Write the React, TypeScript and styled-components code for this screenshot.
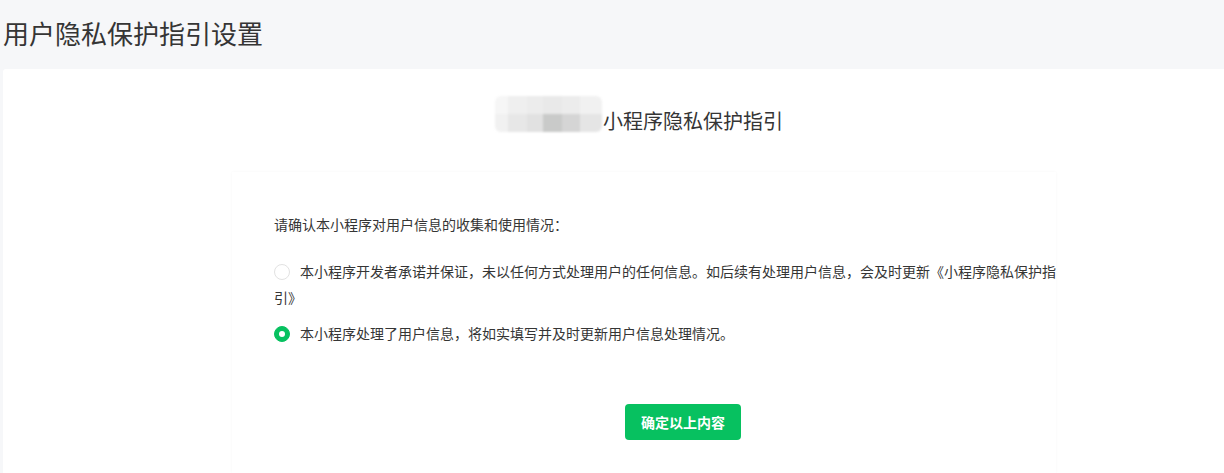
import React from "react";
import styled, { createGlobalStyle } from "styled-components";

const Global = createGlobalStyle`
  html, body { margin: 0; padding: 0; background: #f6f7f9; }
  body { font-family: "Noto Sans CJK SC", "Noto Sans", sans-serif; color: #353535; }
  * { box-sizing: border-box; }
`;

const Page = styled.div`
  width: 1224px;
  height: 473px;
  overflow: hidden;
  padding-left: 3px;
  display: flex;
  flex-direction: column;
`;

const PageTitle = styled.h1`
  margin: 0;
  height: 69px;
  flex: none;
  display: flex;
  align-items: center;
  padding-bottom: 4px;
  font-size: 26px;
  font-weight: 400;
  color: #353535;
`;

const MainCard = styled.div`
  flex: 1;
  display: flex;
  background: #fff;
  border-top-left-radius: 3px;
  padding-top: 33px;
  padding-left: 229px;
`;

const Column = styled.div`
  width: 824px;
  display: flex;
  flex-direction: column;
`;

const Heading = styled.div`
  height: 36px;
  flex: none;
  display: flex;
  align-items: center;
  justify-content: center;
  padding-right: 10px;
  font-size: 20px;
  color: #353535;
  margin-bottom: 34px;
`;

const Blur = styled.div`
  display: grid;
  grid-template-columns: 13px 19px 16px 19px 18px 22px;
  grid-template-rows: 18px 18px;
  border-radius: 6px;
  overflow: hidden;
  filter: blur(0.8px);
  margin-bottom: 12px;
  margin-right: 1px;
`;

const Cell = styled.div<{ $c: string }>`
  background: ${(p) => p.$c};
`;

const InnerCard = styled.div`
  flex: 1;
  background: #fff;
  box-shadow: 0 0 3px rgba(0, 0, 0, 0.035);
  padding: 39px 0 0 42px;
  font-size: 14px;
  line-height: 26px;
  color: #353535;
`;

const Prompt = styled.div`
  margin-bottom: 21px;
`;

const Option = styled.label`
  display: block;
  width: 782px;
  margin-bottom: 10px;
  cursor: pointer;
`;

const Radio = styled.span<{ $checked?: boolean }>`
  display: inline-block;
  vertical-align: -3px;
  width: 16px;
  height: 16px;
  border-radius: 50%;
  margin-right: 10px;
  border: 1px solid ${(p) => (p.$checked ? "#07c160" : "#e2e2e2")};
  background: ${(p) => (p.$checked ? "#07c160" : "#fff")};
  position: relative;
  &::after {
    content: "";
    display: ${(p) => (p.$checked ? "block" : "none")};
    position: absolute;
    width: 6px;
    height: 6px;
    border-radius: 50%;
    background: #fff;
    left: 4px;
    top: 4px;
  }
`;

const ButtonRow = styled.div`
  padding-left: 351px;
  margin-top: 58px;
`;

const Button = styled.button`
  width: 116px;
  height: 36px;
  border: none;
  border-radius: 4px;
  background: #07c160;
  color: #fff;
  font-family: inherit;
  font-size: 14px;
  font-weight: 700;
  cursor: pointer;
`;

const top = ["#f6f6f6", "#efefef", "#ececec", "#e9e9e9", "#ececec", "#f1f1f1"];
const bottom = ["#f1f1f1", "#e7e7e7", "#e1e1e1", "#c9cac9", "#d5d5d5", "#e5e5e5"];

export default function App() {
  return (
    <>
      <Global />
      <Page>
        <PageTitle>用户隐私保护指引设置</PageTitle>
        <MainCard>
          <Column>
            <Heading>
              <Blur>
                {[...top, ...bottom].map((c, i) => (
                  <Cell key={i} $c={c} />
                ))}
              </Blur>
              小程序隐私保护指引
            </Heading>
            <InnerCard>
              <Prompt>请确认本小程序对用户信息的收集和使用情况：</Prompt>
              <Option>
                <Radio />
                本小程序开发者承诺并保证，未以任何方式处理用户的任何信息。如后续有处理用户信息，会及时更新《小程序隐私保护指引》
              </Option>
              <Option>
                <Radio $checked />
                本小程序处理了用户信息，将如实填写并及时更新用户信息处理情况。
              </Option>
              <ButtonRow>
                <Button>确定以上内容</Button>
              </ButtonRow>
            </InnerCard>
          </Column>
        </MainCard>
      </Page>
    </>
  );
}
